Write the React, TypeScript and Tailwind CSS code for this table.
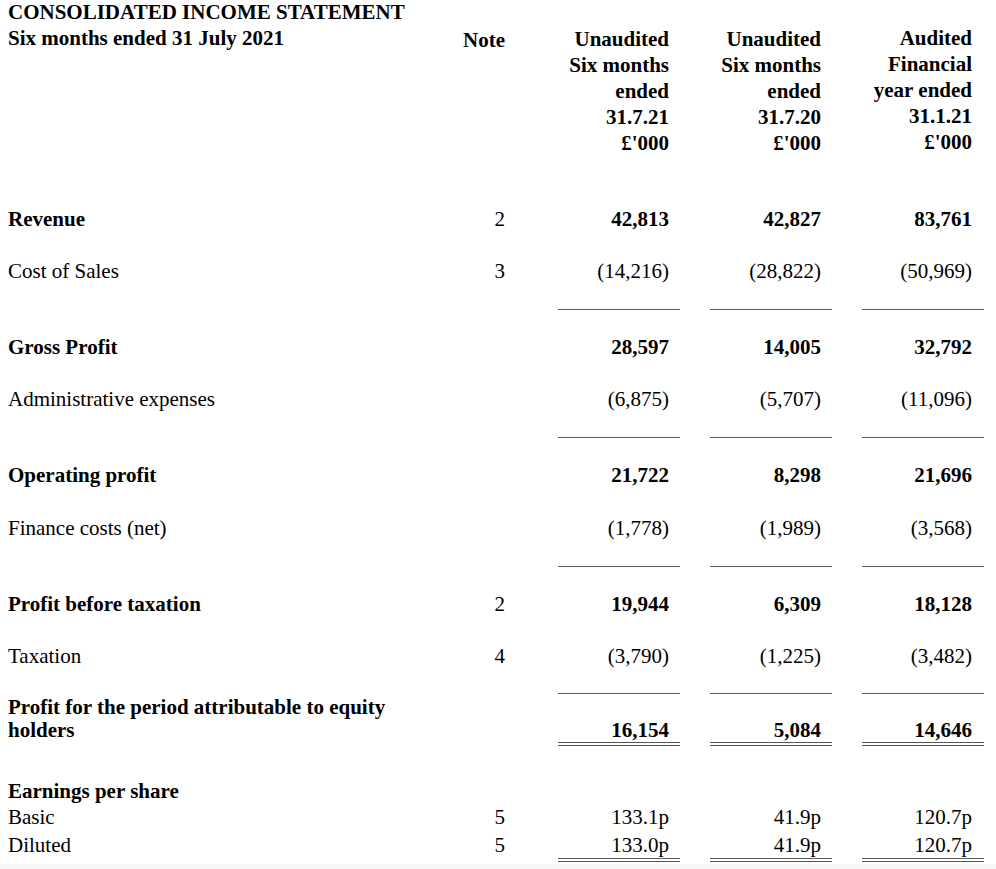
import React from "react";

type Row = {
  label: string;
  note?: string;
  values: [string, string, string];
  bold?: boolean;
};

const ValueCell: React.FC<{ children?: React.ReactNode; last?: boolean }> = ({
  children,
  last,
}) => (
  <div className={`w-[122px] text-right ${last ? "pr-[12px]" : "pr-[11px]"}`}>
    {children}
  </div>
);

const LineRow: React.FC<{ row: Row }> = ({ row }) => (
  <div
    className={`flex h-[26px] items-center leading-[26px] ${
      row.bold ? "font-bold" : "font-normal"
    }`}
  >
    <div className="w-[442px]">{row.label}</div>
    <div className="w-[55px] text-right font-normal">{row.note}</div>
    <div className="ml-[53px] flex gap-[30px]">
      <ValueCell>{row.values[0]}</ValueCell>
      <ValueCell>{row.values[1]}</ValueCell>
      <ValueCell last>{row.values[2]}</ValueCell>
    </div>
  </div>
);

// single underline under the three value columns
const Rule: React.FC<{ short?: boolean }> = ({ short }) => (
  <div
    className={`flex ${
      short ? "h-[27px] items-end pb-[2px]" : "h-[50px] items-center"
    }`}
  >
    <div className="ml-[550px] flex gap-[30px]">
      <div className="h-px w-[122px] bg-[#5a5a5a]" />
      <div className="h-px w-[122px] bg-[#5a5a5a]" />
      <div className="h-px w-[122px] bg-[#5a5a5a]" />
    </div>
  </div>
);

const Spacer: React.FC<{ h?: string }> = ({ h = "h-[26px]" }) => <div className={h} />;

export default function App() {
  return (
    <div className="flex min-h-screen w-[996px] flex-col bg-white font-['Liberation_Serif','Times_New_Roman',serif] text-[21px] text-black">
      <div className="pl-2">
        {/* header */}
        <div className="flex items-start font-bold">
          <div className="w-[442px]">
            <div className="leading-[25px]">CONSOLIDATED INCOME STATEMENT</div>
            <div className="leading-[26px]">Six months ended 31 July 2021</div>
          </div>
          <div className="w-[55px] pt-[27px] text-right leading-[26px]">Note</div>
          <div className="ml-[53px] flex gap-[30px] leading-[26px]">
            <div className="w-[122px] pr-[11px] pt-[26px] text-right">
              Unaudited
              <br />
              Six months
              <br />
              ended
              <br />
              31.7.21
              <br />
              £&apos;000
            </div>
            <div className="w-[122px] pr-[11px] pt-[26px] text-right">
              Unaudited
              <br />
              Six months
              <br />
              ended
              <br />
              31.7.20
              <br />
              £&apos;000
            </div>
            <div className="w-[122px] pr-[12px] pt-[25px] text-right">
              Audited
              <br />
              Financial
              <br />
              year ended
              <br />
              31.1.21
              <br />
              £&apos;000
            </div>
          </div>
        </div>

        <Spacer h="h-[50px]" />
        <LineRow row={{ label: "Revenue", note: "2", values: ["42,813", "42,827", "83,761"], bold: true }} />
        <Spacer />
        <LineRow row={{ label: "Cost of Sales", note: "3", values: ["(14,216)", "(28,822)", "(50,969)"] }} />
        <Rule />
        <LineRow row={{ label: "Gross Profit", values: ["28,597", "14,005", "32,792"], bold: true }} />
        <Spacer />
        <LineRow row={{ label: "Administrative expenses", values: ["(6,875)", "(5,707)", "(11,096)"] }} />
        <Rule />
        <LineRow row={{ label: "Operating profit", values: ["21,722", "8,298", "21,696"], bold: true }} />
        <Spacer h="h-[27px]" />
        <LineRow row={{ label: "Finance costs (net)", values: ["(1,778)", "(1,989)", "(3,568)"] }} />
        <Rule />
        <LineRow row={{ label: "Profit before taxation", note: "2", values: ["19,944", "6,309", "18,128"], bold: true }} />
        <Spacer />
        <LineRow row={{ label: "Taxation", note: "4", values: ["(3,790)", "(1,225)", "(3,482)"] }} />
        <Rule short />

        {/* profit for the period, double underlined */}
        <div className="flex items-end font-bold">
          <div className="w-[442px] pb-[4px] leading-[23px]">
            Profit for the period attributable to equity
            <br />
            holders
          </div>
          <div className="w-[55px]" />
          <div className="ml-[53px] flex gap-[30px] leading-[23px]">
            <div className="w-[122px] border-b-4 border-double border-[#555] pr-[11px] text-right">16,154</div>
            <div className="w-[122px] border-b-4 border-double border-[#555] pr-[11px] text-right">5,084</div>
            <div className="w-[122px] border-b-4 border-double border-[#555] pr-[12px] text-right">14,646</div>
          </div>
        </div>

        {/* earnings per share */}
        <div className="mt-[32px] h-[26px] font-bold leading-[26px]">Earnings per share</div>
        <LineRow row={{ label: "Basic", note: "5", values: ["133.1p", "41.9p", "120.7p"] }} />
        <div className="mt-[2px] flex items-start leading-[26px]">
          <div className="w-[442px]">Diluted</div>
          <div className="w-[55px] text-right">5</div>
          <div className="ml-[53px] flex gap-[30px]">
            <div className="w-[122px] border-b-4 border-double border-[#555] pr-[11px] text-right">133.0p</div>
            <div className="w-[122px] border-b-4 border-double border-[#555] pr-[11px] text-right">41.9p</div>
            <div className="w-[122px] border-b-4 border-double border-[#555] pr-[12px] text-right">120.7p</div>
          </div>
        </div>
      </div>
      <div className="mt-[2px] flex-1 bg-[#f7f7f7]" />
    </div>
  );
}
